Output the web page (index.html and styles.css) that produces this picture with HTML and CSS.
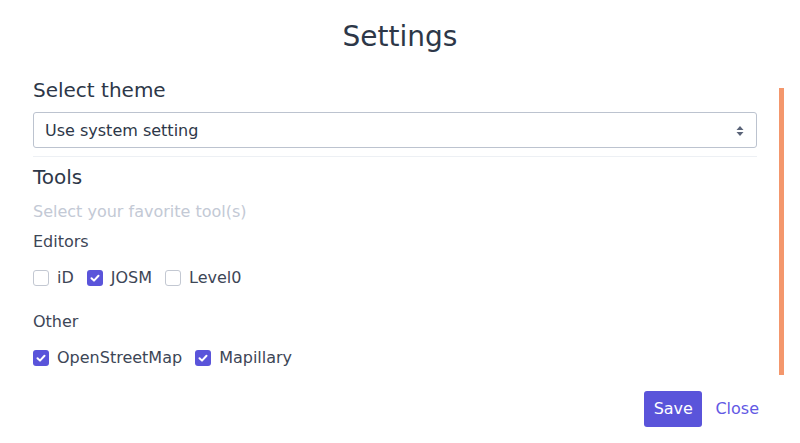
FILE: index.html
```html
<!DOCTYPE html>
<html>
<head>
<meta charset="utf-8">
<link rel="stylesheet" href="styles.css">
</head>
<body>
<div class="modal">
  <h1 class="title">Settings</h1>
  <div class="scroll">
    <div class="content">
      <h2 class="heading">Select theme</h2>
      <div class="select">
        <span>Use system setting</span>
        <svg class="arrows" width="8" height="12" viewBox="0 0 8 12"><path d="M4 1 L7.5 5 L0.5 5 Z M4 11 L7.5 7 L0.5 7 Z" fill="#5a6378"/></svg>
      </div>
      <div class="divider"></div>
      <h2 class="heading tools">Tools</h2>
      <p class="hint">Select your favorite tool(s)</p>
      <div class="group">
        <div class="group-label">Editors</div>
        <div class="checks">
          <label class="check"><span class="box"></span>iD</label>
          <label class="check"><span class="box on"><svg width="16" height="16" viewBox="0 0 16 16"><path d="M4.5 8.2 L7 10.6 L11.5 5.8" fill="none" stroke="#fff" stroke-width="2" stroke-linecap="round" stroke-linejoin="round"/></svg></span>JOSM</label>
          <label class="check"><span class="box"></span>Level0</label>
        </div>
      </div>
      <div class="group">
        <div class="group-label">Other</div>
        <div class="checks">
          <label class="check"><span class="box on"><svg width="16" height="16" viewBox="0 0 16 16"><path d="M4.5 8.2 L7 10.6 L11.5 5.8" fill="none" stroke="#fff" stroke-width="2" stroke-linecap="round" stroke-linejoin="round"/></svg></span>OpenStreetMap</label>
          <label class="check"><span class="box on"><svg width="16" height="16" viewBox="0 0 16 16"><path d="M4.5 8.2 L7 10.6 L11.5 5.8" fill="none" stroke="#fff" stroke-width="2" stroke-linecap="round" stroke-linejoin="round"/></svg></span>Mapillary</label>
        </div>
      </div>
    </div>
    <div class="thumb"></div>
  </div>
  <div class="actions">
    <button class="btn save">Save</button>
    <button class="btn close">Close</button>
  </div>
</div>
</body>
</html>
```

FILE: styles.css
```css
* { box-sizing: border-box; }
html, body { margin: 0; padding: 0; background: #fff; }
body {
  font-family: "DejaVu Sans", sans-serif;
  color: #2d3748;
  font-size: 16px;
  line-height: 24px;
  width: 800px;
  height: 443px;
  overflow: hidden;
}
.modal { padding-top: 19px; }
.title {
  margin: 0;
  font-size: 28px;
  line-height: 36px;
  font-weight: normal;
  text-align: center;
  color: #2d3748;
}
.scroll {
  position: relative;
  height: 300px;
  margin-top: 21px;
}
.content { padding: 0 43px 0 33px; }
.heading {
  margin: 0;
  font-size: 20px;
  line-height: 28px;
  font-weight: normal;
  color: #2d3748;
}
.select {
  margin-top: 8px;
  height: 36px;
  border: 1px solid #bcc3cf;
  border-radius: 3px;
  display: flex;
  align-items: center;
  justify-content: space-between;
  padding: 1px 12px 0 11px;
  color: #2d3748;
}
.divider {
  margin-top: 8px;
  height: 1px;
  background: #edf0f4;
}
.tools { margin-top: 6px; }
.hint {
  margin: 9px 0 0;
  color: #c3c9d5;
}
.group { margin-top: 6px; }
.group + .group { margin-top: 20px; }
.group-label { color: #3d4656; }
.checks {
  margin-top: 12px;
  display: flex;
  align-items: center;
  gap: 13px;
}
.check {
  display: flex;
  align-items: center;
  gap: 8px;
  color: #3d4656;
}
.box {
  width: 16px;
  height: 16px;
  border: 1px solid #c3c8d2;
  border-radius: 3px;
  display: block;
  background: #fff;
}
.box.on {
  border: none;
  background: #5a54da;
}
.box svg { display: block; }
.thumb {
  position: absolute;
  left: 779px;
  top: 12px;
  width: 5px;
  height: 287px;
  background: #f4976c;
}
.actions {
  display: flex;
  justify-content: flex-end;
  align-items: center;
  gap: 5px;
  padding-right: 41px;
  margin-top: 15px;
}
.btn {
  font-family: "DejaVu Sans", sans-serif;
  font-size: 16px;
  line-height: 20px;
  border: none;
  background: none;
  padding: 8px 10px;
  border-radius: 3px;
  cursor: pointer;
}
.save {
  background: #5a54da;
  color: #fff;
  padding: 8px 9.5px;
}
.close {
  color: #6259e4;
  padding: 8px 8px;
  margin-right: -8px;
}
```
